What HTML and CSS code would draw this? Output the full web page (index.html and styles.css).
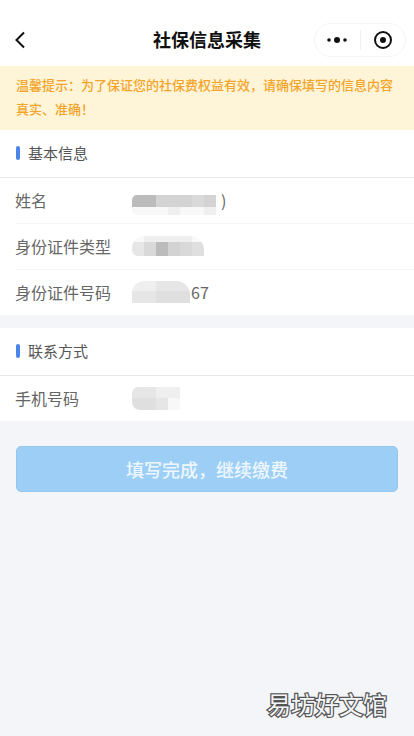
FILE: index.html
```html
<!DOCTYPE html>
<html lang="zh-CN">
<head>
<meta charset="utf-8">
<title>社保信息采集</title>
<link rel="stylesheet" href="styles.css">
</head>
<body>
<div class="page">
  <header class="nav">
    <svg class="back" width="12" height="18" viewBox="0 0 12 18"><path d="M10 1.5 2.5 9l7.5 7.5" fill="none" stroke="#111" stroke-width="2"/></svg>
    <h1 class="nav-title">社保信息采集</h1>
    <div class="capsule">
      <svg class="cap-dots" width="22" height="8" viewBox="0 0 22 8"><circle cx="3" cy="4" r="1.8" fill="#111"/><circle cx="11" cy="4" r="3" fill="#111"/><circle cx="19" cy="4" r="1.8" fill="#111"/></svg>
      <span class="cap-line"></span>
      <svg class="cap-target" width="20" height="20" viewBox="0 0 20 20"><circle cx="10" cy="10" r="8" fill="none" stroke="#111" stroke-width="2"/><circle cx="10" cy="10" r="3" fill="#111"/></svg>
    </div>
  </header>

  <p class="notice">温馨提示：为了保证您的社保费权益有效，请确保填写的信息内容真实、准确！</p>

  <section class="card">
    <h2 class="card-head">基本信息</h2>
    <div class="row">
      <span class="label">姓名</span>
      <span class="mosaic m-name">
        <i class="s1"></i><i class="s1"></i><i class="s3"></i><i class="s3"></i><i class="s3"></i><i class="s4"></i><i class="s3"></i>
        <i class="s8"></i><i class="s8"></i><i class="s8"></i><i class="s7"></i><i class="s8"></i><i class="s8"></i><i class="s7"></i>
      </span><span class="value">)</span>
    </div>
    <div class="row">
      <span class="label">身份证件类型</span>
      <span class="mosaic m-type">
        <i class="s8"></i><i class="s7"></i><i class="s7"></i><i class="s7"></i><i class="s7"></i><i class="s8"></i>
        <i class="s6"></i><i class="s4"></i><i class="s1"></i><i class="s3"></i><i class="s4"></i><i class="s5"></i>
      </span>
    </div>
    <div class="row row-last">
      <span class="label">身份证件号码</span>
      <span class="mosaic m-id">
        <i class="s7"></i><i class="s7"></i><i class="s6"></i><i class="s6"></i><i class="s6"></i>
        <i class="s6"></i><i class="s6"></i><i class="s5"></i><i class="s5"></i><i class="s5"></i>
      </span><span class="value">67</span>
    </div>
  </section>

  <section class="card card-second">
    <h2 class="card-head">联系方式</h2>
    <div class="row row-last">
      <span class="label">手机号码</span>
      <span class="mosaic m-phone">
        <i class="s6"></i><i class="s6"></i><i class="s7"></i><i class="s7"></i>
        <i class="s5"></i><i class="s5"></i><i class="s6"></i><i class="s8"></i>
      </span>
    </div>
  </section>

  <div class="action">
    <button class="submit" type="button">填写完成，继续缴费</button>
  </div>

  <div class="watermark">易坊好文馆</div>
</div>
</body>
</html>
```
FILE: styles.css
```css
* { box-sizing: border-box; margin: 0; padding: 0; }
html, body { height: 100%; }
body {
  background: #f4f5f9;
  font-family: "Noto Sans CJK SC", "Liberation Sans", sans-serif;
  color: #555;
}
.page {
  position: relative;
  width: 414px;
  height: 736px;
  overflow: hidden;
}
.nav {
  position: relative;
  height: 66px;
  background: #fff;
  display: flex;
  align-items: center;
  padding: 14px 8px 0 14px;
}
.nav-title {
  position: absolute;
  left: 0;
  right: 0;
  top: 27px;
  text-align: center;
  font-size: 18px;
  line-height: 24px;
  font-weight: 700;
  color: #111;
}
.back { flex: none; }
.capsule {
  position: relative;
  margin-left: auto;
  width: 92px;
  height: 34px;
  margin-top: -1px;
  border: 1px solid #f4f4f4;
  border-radius: 17px;
  display: flex;
  align-items: center;
  background: #fff;
}
.cap-dots { margin-left: 11px; flex: none; }
.cap-line { width: 1px; height: 20px; background: #f0f0f0; margin-left: 12px; flex: none; }
.cap-target { margin-left: 12px; flex: none; }
.notice {
  height: 64px;
  background: #fef4d8;
  color: #f3a52b;
  font-size: 13px;
  line-height: 24px;
  padding: 7px 16px;
  font-weight: 500;
}
.card { background: #fff; }
.card-second { margin-top: 13px; }
.card-head {
  height: 48px;
  border-bottom: 1px solid #e8e8e8;
  display: flex;
  align-items: center;
  font-size: 15px;
  font-weight: 400;
  color: #555;
  padding: 0 0 2px 16px;
}
.card-head::before {
  content: "";
  width: 4px;
  height: 14px;
  border-radius: 2px;
  background: #4a86e8;
  margin-right: 8px;
}
.row {
  height: 46px;
  margin-left: 15px;
  padding-bottom: 2px;
  border-bottom: 1px solid #f5f5f5;
  display: flex;
  align-items: center;
}
.row-last { border-bottom: 0; height: 45px; }
.label {
  width: 117px;
  flex: none;
  font-size: 16px;
  color: #666;
}
.value { font-size: 16px; color: #666; margin-left: 1px; }
.mosaic {
  display: grid;
  grid-auto-rows: 12px;
  overflow: hidden;
}
.mosaic i { display: block; }
.m-name { grid-template-columns: repeat(7, 12px); width: 88px; margin-top: 10px; border-radius: 5px 0 0 5px; grid-template-rows: 12px 8px; }
.m-type { grid-template-columns: repeat(6, 12px); border-radius: 12px 14px 0 6px; grid-template-rows: 6px 14px; }
.m-id { grid-template-columns: repeat(5, 12px); width: 58px; margin-top: 1px; border-radius: 12px 14px 0 0; grid-template-rows: 10px 12px; }
.m-phone { grid-template-columns: repeat(4, 12px); margin-top: 2px; border-radius: 6px 0 0 8px; grid-template-rows: 11px 12px; }
.s1 { background: #bcbcbc; }
.s3 { background: #d3d3d3; }
.s4 { background: #d9d9d9; }
.s5 { background: #dfdfdf; }
.s6 { background: #e6e6e6; }
.s7 { background: #efefef; }
.s8 { background: #f8f8f8; }
.action { padding: 25px 16px 0; }
.submit {
  display: block;
  width: 100%;
  height: 46px;
  background: #9dcff6;
  border: 1px solid #94c6ee;
  border-radius: 5px;
  color: #eef7fe;
  font: 500 18px "Noto Sans CJK SC", "Liberation Sans", sans-serif;
}
.watermark {
  position: absolute;
  right: 27px;
  top: 688px;
  font-size: 24px;
  line-height: 32px;
  color: #f4f5f9;
  -webkit-text-stroke: 2.5px #555;
  paint-order: stroke fill;
}
```
